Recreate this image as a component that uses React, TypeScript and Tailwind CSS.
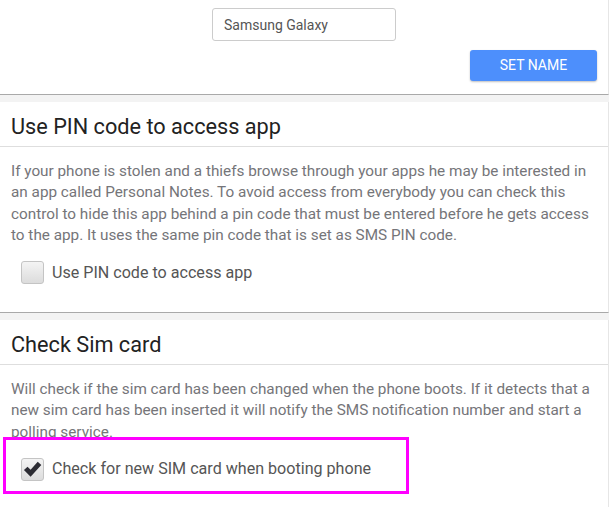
import React from "react";

function Checkbox({ checked }: { checked?: boolean }) {
  return (
    <span className="flex h-[23px] w-[23px] shrink-0 items-center justify-center rounded-[3px] border border-[#c4c4c4] bg-gradient-to-b from-[#f4f4f4] to-[#dcdcdc]">
      {checked && (
        <svg viewBox="0 0 16 16" className="h-[19px] w-[19px]">
          <path
            d="M0.8 8.4 L3.8 5.6 L6.4 8.2 L12.4 1.4 L15.4 4.2 L6.4 14.2 Z"
            fill="#2c2c33"
          />
        </svg>
      )}
    </span>
  );
}

function Card({
  title,
  text,
  label,
  checked,
  highlight,
}: {
  title: string;
  text: string;
  label: string;
  checked?: boolean;
  highlight?: boolean;
}) {
  return (
    <section className="relative bg-white border-b border-[#a9a9a9] border-r border-r-[#e6e6e6]">
      <div className="h-[45px] border-b border-[#dedede] pl-[11px] pt-[9px]">
        <h2 className="text-[21.7px] leading-[32px] text-[#222]">{title}</h2>
      </div>
      <div className="px-[11px] pt-[14px] pb-[27px]">
        <p className="text-[15.3px] leading-[21.4px] text-[#757579]">{text}</p>
        <label className="mt-[14px] flex items-center gap-[8px] pl-[10px]">
          <Checkbox checked={checked} />
          <span className="text-[16.1px] text-[#555]">{label}</span>
        </label>
      </div>
      {highlight && (
        <div className="absolute left-[3px] top-[117px] h-[57px] w-[406px] border-[3px] border-[#ff00ff]" />
      )}
    </section>
  );
}

export default function App() {
  return (
    <div
      className="min-h-[507px] w-[609px] bg-[#f3f3f3]"
      style={{ fontFamily: "Roboto, 'Liberation Sans', sans-serif" }}
    >
      <section className="h-[95px] bg-white border-b border-[#a9a9a9] border-r border-r-[#e6e6e6] pt-[8px]">
        <div className="flex justify-center">
          <input
            defaultValue="Samsung Galaxy"
            className="h-[33px] w-[184px] rounded-[3px] border border-[#cccccc] px-[11px] text-[14px] text-[#555] outline-none"
          />
        </div>
        <div className="mt-[9px] flex justify-end pr-[11px]">
          <button className="h-[31px] w-[127px] rounded-[3px] bg-[#4d8ffc] text-[14px] text-white shadow-[0_1px_2px_rgba(0,0,0,0.25)]">
            SET NAME
          </button>
        </div>
      </section>
      <div className="h-[7px]" />
      <Card
        title="Use PIN code to access app"
        text="If your phone is stolen and a thiefs browse through your apps he may be interested in an app called Personal Notes. To avoid access from everybody you can check this control to hide this app behind a pin code that must be entered before he gets access to the app. It uses the same pin code that is set as SMS PIN code."
        label="Use PIN code to access app"
      />
      <div className="h-[7px]" />
      <Card
        title="Check Sim card"
        text="Will check if the sim card has been changed when the phone boots. If it detects that a new sim card has been inserted it will notify the SMS notification number and start a polling service."
        label="Check for new SIM card when booting phone"
        checked
        highlight
      />
    </div>
  );
}
